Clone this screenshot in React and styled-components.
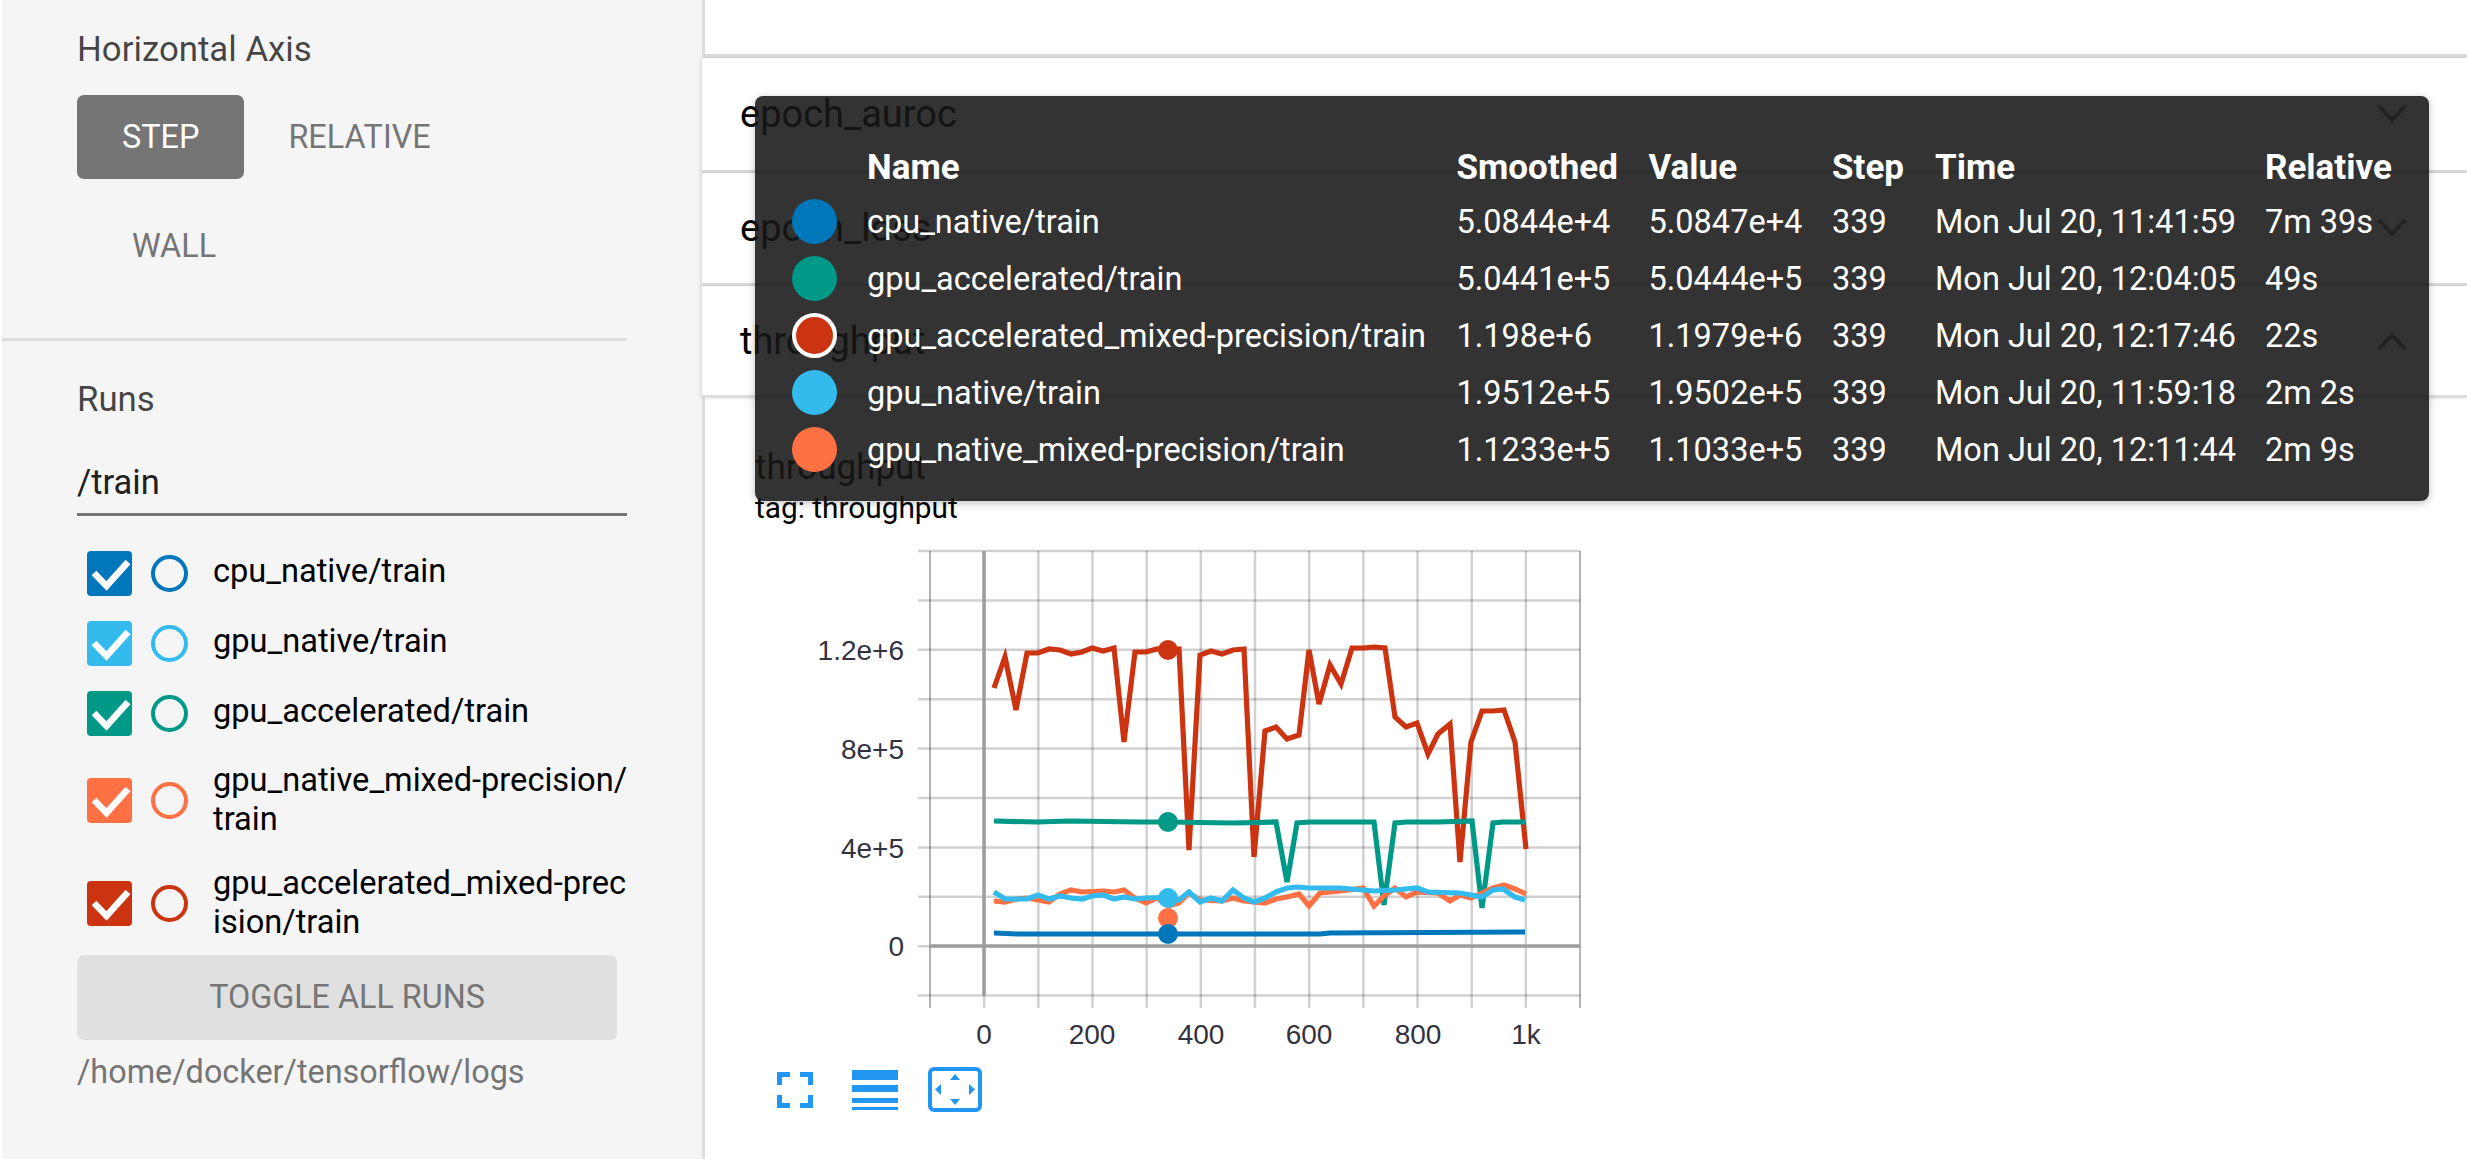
import React from 'react';
import styled, { createGlobalStyle } from 'styled-components';

const BLUE = '#0077bb';
const SKY = '#33bbee';
const TEAL = '#009988';
const ORANGE = '#ff7043';
const RED = '#cc3311';

const RUNS = [
  { name: 'cpu_native/train', color: BLUE, short: true },
  { name: 'gpu_native/train', color: SKY, short: true },
  { name: 'gpu_accelerated/train', color: TEAL, short: true },
  { name: 'gpu_native_mixed-precision/train', color: ORANGE },
  { name: 'gpu_accelerated_mixed-precision/train', color: RED },
];

const TOOLTIP_ROWS = [
  { color: BLUE, name: 'cpu_native/train', smoothed: '5.0844e+4', value: '5.0847e+4', step: '339', time: 'Mon Jul 20, 11:41:59', relative: '7m 39s' },
  { color: TEAL, name: 'gpu_accelerated/train', smoothed: '5.0441e+5', value: '5.0444e+5', step: '339', time: 'Mon Jul 20, 12:04:05', relative: '49s' },
  { color: RED, active: true, name: 'gpu_accelerated_mixed-precision/train', smoothed: '1.198e+6', value: '1.1979e+6', step: '339', time: 'Mon Jul 20, 12:17:46', relative: '22s' },
  { color: SKY, name: 'gpu_native/train', smoothed: '1.9512e+5', value: '1.9502e+5', step: '339', time: 'Mon Jul 20, 11:59:18', relative: '2m 2s' },
  { color: ORANGE, name: 'gpu_native_mixed-precision/train', smoothed: '1.1233e+5', value: '1.1033e+5', step: '339', time: 'Mon Jul 20, 12:11:44', relative: '2m 9s' },
];

// chart coordinates are the page's own pixels, see the svg viewBox
const SERIES = [
  {
    color: RED,
    points: '994,688 1005,657 1016,710 1027,653 1038,653 1049,649 1060,650 1071,654 1082,652 1092,648 1103,651 1114,648 1124,742 1135,652 1146,652 1157,649 1168,650 1179,649 1189,850 1200,655 1211,651 1222,654 1233,650 1244,649 1254,857 1265,731 1276,727 1287,739 1299,735 1309,650 1319,704 1330,665 1341,684 1352,648 1363,648 1374,647 1385,648 1395,717 1406,727 1417,723 1428,754 1438,734 1450,724 1460,862 1471,742 1482,711 1493,711 1504,710 1515,742 1526,849',
  },
  {
    color: TEAL,
    points: '994,821 1037,822 1070,821 1140,822 1168,822 1233,823 1276,822 1287,882 1297,823 1309,822 1352,822 1374,822 1384,905 1395,823 1407,822 1438,822 1472,821 1482,908 1493,823 1503,822 1525,822',
  },
  {
    color: ORANGE,
    points: '994,901 1005,902 1017,899 1027,898 1038,900 1049,902 1060,894 1071,890 1082,892 1103,891 1114,892 1124,890 1135,898 1146,903 1157,898 1168,906 1179,903 1189,893 1200,900 1222,901 1233,898 1244,901 1265,903 1276,899 1287,897 1299,894 1309,906 1320,893 1340,891 1363,888 1374,906 1385,895 1395,888 1406,897 1417,892 1438,893 1450,901 1460,895 1471,898 1493,888 1504,885 1515,889 1526,894',
  },
  {
    color: SKY,
    points: '994,892 1005,899 1027,899 1038,895 1049,899 1060,896 1071,898 1082,899 1092,896 1103,895 1114,899 1124,897 1135,899 1146,898 1168,897 1179,900 1189,892 1200,902 1211,898 1222,901 1233,890 1244,898 1254,902 1265,898 1276,892 1287,888 1297,887 1309,888 1340,888 1374,891 1395,890 1417,888 1428,892 1460,893 1482,897 1493,890 1503,889 1515,897 1525,900',
  },
  {
    color: BLUE,
    points: '994,933 1017,934 1140,934 1168,934 1320,934 1330,933 1525,932',
  },
];

const MARKERS = [
  { color: RED, y: 650 },
  { color: TEAL, y: 822 },
  { color: ORANGE, y: 918 },
  { color: SKY, y: 898 },
  { color: BLUE, y: 934 },
];

const GRID_X = Array.from({ length: 13 }, (_, i) => 930 + i * 54.17);
const GRID_Y = Array.from({ length: 10 }, (_, i) => 551 + i * 49.4);
const X_LABELS = [
  { x: 984, text: '0' },
  { x: 1092, text: '200' },
  { x: 1201, text: '400' },
  { x: 1309, text: '600' },
  { x: 1418, text: '800' },
  { x: 1526, text: '1k' },
];
const Y_LABELS = [
  { y: 650, text: '1.2e+6' },
  { y: 749, text: '8e+5' },
  { y: 848, text: '4e+5' },
  { y: 946, text: '0' },
];

const GlobalStyle = createGlobalStyle`
  html, body {
    margin: 0;
    background: #fff;
    font-family: Roboto, "Liberation Sans", sans-serif;
  }
`;

const Page = styled.div`
  display: flex;
  height: 1159px;
  overflow: hidden;
  padding-left: 2px;
  box-sizing: border-box;
`;

const Sidebar = styled.aside`
  flex: 0 0 700px;
  min-width: 0;
  background: #f5f5f5;
`;

const Section = styled.section`
  padding: ${(p) => p.$top || 0}px 75px 0;
`;

const Heading = styled.div`
  font-size: 34.8px;
  line-height: 40px;
  color: rgba(0, 0, 0, 0.72);
`;

const AxisOptions = styled.div`
  display: flex;
  flex-wrap: wrap;
  row-gap: 25px;
  margin-top: 26px;
  width: 550px;
`;

const AxisButton = styled.button`
  height: 84px;
  padding: 0 ${(p) => p.$pad}px;
  border: 0;
  border-radius: 7px;
  font: 400 32.4px Roboto, sans-serif;
  background: ${(p) => (p.$active ? '#757575' : 'transparent')};
  color: ${(p) => (p.$active ? '#fff' : '#757575')};
`;

const Rule = styled.hr`
  width: 625px;
  height: 3px;
  margin: 50px 0 38px;
  border: 0;
  background: #ddd;
`;

const Filter = styled.input`
  display: block;
  box-sizing: content-box;
  width: 550px;
  height: 62px;
  margin-top: 32px;
  padding: 0;
  border: 0;
  border-bottom: 3px solid #757575;
  outline: 0;
  background: transparent;
  font: 400 34.5px Roboto, sans-serif;
  color: #212121;
`;

const RunList = styled.div`
  margin-top: 22.5px;
`;

const RunRow = styled.label`
  display: flex;
  align-items: center;
  min-height: 70px;
  box-sizing: border-box;
  padding: 12.5px 0 12.5px 10px;
`;

const CheckBox = styled.span`
  flex: none;
  width: 45px;
  height: 45px;
  border-radius: 4px;
  background: ${(p) => p.$color};
  svg {
    display: block;
  }
`;

const Ring = styled.span`
  flex: none;
  box-sizing: border-box;
  width: 37px;
  height: 37px;
  margin: 0 25px 0 19px;
  border-radius: 50%;
  border: 4px solid ${(p) => p.$color};
`;

const RunName = styled.span`
  flex: none;
  width: 416px;
  margin-top: ${(p) => (p.$short ? -5 : 0)}px;
  font-size: 32.6px;
  line-height: 39px;
  word-break: break-all;
  color: #000;
`;

const ToggleAll = styled.button`
  display: block;
  width: 540px;
  height: 85px;
  border: 0;
  border-radius: 7px;
  background: #e0e0e0;
  color: #757575;
  font: 400 32.3px Roboto, sans-serif;
`;

const LogDir = styled.div`
  margin-top: 12px;
  font-size: 32.4px;
  line-height: 40px;
  color: #757575;
`;

const Main = styled.main`
  position: relative;
  flex: 1;
  min-width: 0;
`;

const TopCard = styled.div`
  height: 54px;
  border-left: 3px solid #ddd;
  border-bottom: 4px solid #ddd;
`;

const GroupRow = styled.div`
  display: flex;
  align-items: center;
  justify-content: space-between;
  box-sizing: border-box;
  height: ${(p) => p.$height}px;
  padding: 0 60px 0 38px;
  background: #fff;
  border-bottom: 3px solid #ddd;
  box-shadow: -1px 0 4px rgba(0, 0, 0, 0.14);
  font-size: 38px;
  color: #000;
`;

const ChartCard = styled.div`
  height: 764px;
  padding: 50px 0 0 50px;
  border-left: 3px solid #ddd;
`;

const ChartTitle = styled.div`
  font-size: 35px;
  line-height: 40px;
  color: #000;
`;

const ChartTag = styled.div`
  font-size: 29.8px;
  line-height: 40px;
  color: #000;
`;

const Plot = styled.svg`
  display: block;
  width: 845px;
  height: 525px;
  margin-top: 12px;
`;

const AxisText = styled.text`
  font: 400 28px "Liberation Sans", Arial, sans-serif;
  fill: #33333f;
`;

const GridLine = styled.line`
  stroke: ${(p) => (p.$edge ? 'rgba(0, 0, 0, 0.3)' : 'rgba(0, 0, 0, 0.18)')};
  stroke-width: ${(p) => (p.$edge ? 2 : 2.5)}px;
`;

const ChartTools = styled.div`
  display: flex;
  align-items: center;
  margin: 2px 0 0 22px;
`;

const ToolIcon = styled.svg`
  display: block;
  flex: none;
  margin-left: ${(p) => p.$gap || 0}px;
  fill: #2196f3;
`;

const Tooltip = styled.div`
  position: absolute;
  left: 53px;
  top: 96px;
  width: 1674px;
  height: 405px;
  box-sizing: border-box;
  padding-top: 45px;
  border-radius: 8px;
  background: rgba(23, 23, 23, 0.88);
  box-shadow: 0 2px 8px rgba(0, 0, 0, 0.25);
  color: #fff;
  font-size: 32.5px;
`;

const TipRow = styled.div`
  display: grid;
  grid-template-columns: 112px 589.5px 192px 183.5px 103px 330px 1fr;
  align-items: center;
  height: ${(p) => (p.$head ? 52 : 57)}px;
  white-space: nowrap;
  font-size: ${(p) => (p.$head ? 35 : 32.5)}px;
  font-weight: ${(p) => (p.$head ? 700 : 400)};
`;

const Dot = styled.span`
  display: block;
  box-sizing: border-box;
  width: 45px;
  height: 45px;
  margin-left: 37px;
  border-radius: 50%;
  background: ${(p) => p.$color};
  border: ${(p) => (p.$active ? '4px solid #fff' : '0')};
`;

const CheckMark = () => (
  <svg width="45" height="45" viewBox="0 0 45 45">
    <path d="M7 22 L19.5 35 L41 11" fill="none" stroke="#fff" strokeWidth="6.5" />
  </svg>
);

const Chevron = ({ up }) => (
  <svg width="30" height="18" viewBox="0 0 30 18">
    <path d={up ? 'M2 17 L15 3 L28 17' : 'M2 1 L15 15 L28 1'} fill="none" stroke="#757575" strokeWidth="4" />
  </svg>
);

const FitIcon = () => (
  <ToolIcon width="36" height="36" viewBox="0 0 36 36">
    <path d="M0 0 H13 V5 H5 V13 H0 Z M23 0 H36 V13 H31 V5 H23 Z M0 23 H5 V31 H13 V36 H0 Z M31 23 H36 V36 H23 V31 H31 Z" />
  </ToolIcon>
);

const ListIcon = () => (
  <ToolIcon $gap={39} width="46" height="40" viewBox="0 0 46 40">
    <path d="M0 0 H46 V10 H0 Z M0 15 H46 V22 H0 Z M0 28 H46 V33 H0 Z M0 37 H46 V40 H0 Z" />
  </ToolIcon>
);

const PanIcon = () => (
  <ToolIcon $gap={30} width="54" height="45" viewBox="0 0 54 45">
    <rect x="2" y="2" width="50" height="41" rx="4" fill="none" stroke="#2196f3" strokeWidth="4" />
    <path d="M27 7 L32 13 H22 Z M27 38 L22 32 H32 Z M7 22.5 L13 17 V28 Z M47 22.5 L41 28 V17 Z" />
  </ToolIcon>
);

const Chart = () => (
  <Plot viewBox="755 540 845 525">
    {GRID_Y.map((y) => (
      <GridLine key={y} x1="918" x2="1580" y1={y} y2={y} />
    ))}
    {GRID_X.map((x, i) => (
      <GridLine key={x} $edge={i === 0 || i === 12} x1={x} x2={x} y1="551" y2="1008" />
    ))}
    <line x1="984" x2="984" y1="551" y2="996" stroke="#9e9e9e" strokeWidth="3.5" />
    <line x1="930" x2="1580" y1="946" y2="946" stroke="#9e9e9e" strokeWidth="3.5" />
    {Y_LABELS.map((l) => (
      <AxisText key={l.text} x="904" y={l.y + 10} textAnchor="end">
        {l.text}
      </AxisText>
    ))}
    {X_LABELS.map((l) => (
      <AxisText key={l.text} x={l.x} y="1044" textAnchor="middle">
        {l.text}
      </AxisText>
    ))}
    {SERIES.map((s) => (
      <polyline key={s.color} points={s.points} fill="none" stroke={s.color} strokeWidth="5.2" />
    ))}
    {MARKERS.map((m) => (
      <circle key={m.color} cx="1168" cy={m.y} r="10" fill={m.color} />
    ))}
  </Plot>
);

const App = () => (
  <Page>
    <GlobalStyle />
    <Sidebar>
      <Section $top={29}>
        <Heading>Horizontal Axis</Heading>
        <AxisOptions>
          <AxisButton $active $pad={45}>STEP</AxisButton>
          <AxisButton $pad={44}>RELATIVE</AxisButton>
          <AxisButton $pad={55}>WALL</AxisButton>
        </AxisOptions>
      </Section>
      <Rule />
      <Section>
        <Heading>Runs</Heading>
        <Filter readOnly value="/train" />
        <RunList>
          {RUNS.map((run) => (
            <RunRow key={run.name}>
              <CheckBox $color={run.color}>
                <CheckMark />
              </CheckBox>
              <Ring $color={run.color} />
              <RunName $short={run.short}>{run.name}</RunName>
            </RunRow>
          ))}
        </RunList>
        <ToggleAll>TOGGLE ALL RUNS</ToggleAll>
        <LogDir>/home/docker/tensorflow/logs</LogDir>
      </Section>
    </Sidebar>
    <Main>
      <TopCard />
      <GroupRow $height={115}>
        epoch_auroc
        <Chevron />
      </GroupRow>
      <GroupRow $height={113}>
        epoch_loss
        <Chevron />
      </GroupRow>
      <GroupRow $height={112}>
        throughput
        <Chevron up />
      </GroupRow>
      <ChartCard>
        <ChartTitle>throughput</ChartTitle>
        <ChartTag>tag: throughput</ChartTag>
        <Chart />
        <ChartTools>
          <FitIcon />
          <ListIcon />
          <PanIcon />
        </ChartTools>
      </ChartCard>
      <Tooltip>
        <TipRow $head>
          <span />
          <span>Name</span>
          <span>Smoothed</span>
          <span>Value</span>
          <span>Step</span>
          <span>Time</span>
          <span>Relative</span>
        </TipRow>
        {TOOLTIP_ROWS.map((row) => (
          <TipRow key={row.name}>
            <Dot $color={row.color} $active={row.active} />
            <span>{row.name}</span>
            <span>{row.smoothed}</span>
            <span>{row.value}</span>
            <span>{row.step}</span>
            <span>{row.time}</span>
            <span>{row.relative}</span>
          </TipRow>
        ))}
      </Tooltip>
    </Main>
  </Page>
);

export default App;
